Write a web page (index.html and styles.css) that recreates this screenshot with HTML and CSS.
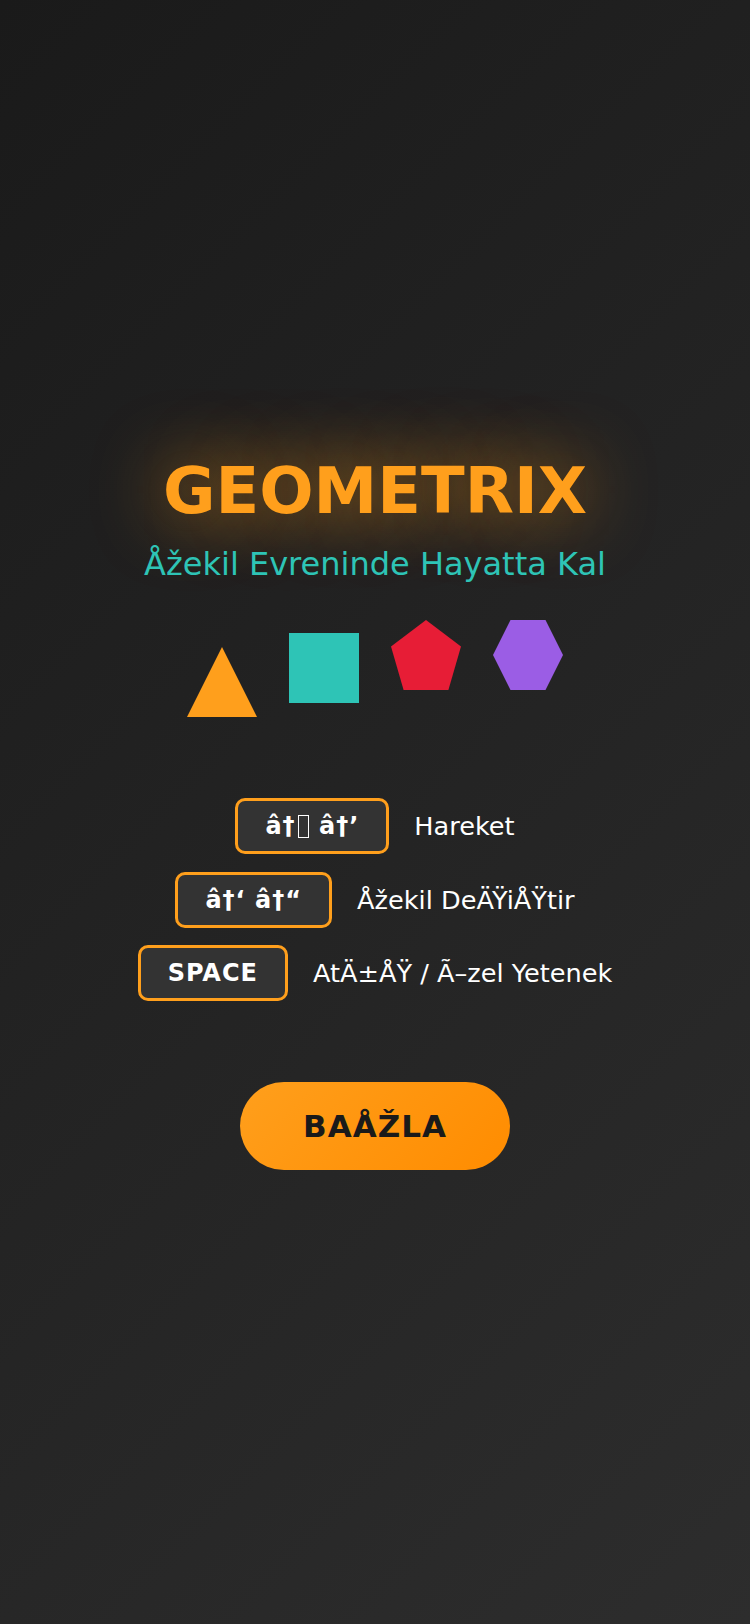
FILE: index.html
```html
<!DOCTYPE html>
<html lang="tr">
<head>
<meta charset="utf-8">
<title>GEOMETRIX</title>
<link rel="stylesheet" href="styles.css">
</head>
<body>
<main class="screen">
  <h1 class="title">GEOMETRIX</h1>
  <p class="subtitle">Åžekil Evreninde Hayatta Kal</p>
  <div class="shapes">
    <div class="shape triangle"></div>
    <div class="shape square"></div>
    <div class="shape pentagon"></div>
    <div class="shape hexagon"></div>
  </div>
  <div class="controls">
    <div class="control-row"><span class="key">â†<span class="tofu"></span> â†’</span><span class="label">Hareket</span></div>
    <div class="control-row"><span class="key">â†‘ â†“</span><span class="label">Åžekil DeÄŸiÅŸtir</span></div>
    <div class="control-row"><span class="key">SPACE</span><span class="label">AtÄ±ÅŸ / Ã–zel Yetenek</span></div>
  </div>
  <button class="start-btn" type="button">BAÅŽLA</button>
</main>
</body>
</html>
```
FILE: styles.css
```css
html, body {
  margin: 0;
  padding: 0;
}
body {
  background: linear-gradient(135deg, #1a1a1a 0%, #2d2d2d 100%);
  min-height: 100vh;
  font-family: "DejaVu Sans", sans-serif;
  color: #ffffff;
}
.screen {
  min-height: 1624px;
  display: flex;
  flex-direction: column;
  align-items: center;
  justify-content: center;
}
.title {
  margin: 0 0 17px;
  font-size: 64px;
  font-weight: bold;
  color: #ff9f1c;
  text-shadow: 0 0 70px rgba(255, 159, 28, 0.8);
}
.subtitle {
  margin: 0;
  font-size: 32px;
  color: #2ec4b6;
}
.shapes {
  margin-top: 37px;
  display: flex;
  align-items: flex-start;
  gap: 32px;
}
.shape {
  width: 70px;
  height: 70px;
}
.triangle {
  margin-top: 27px;
  background: #ff9f1c;
  clip-path: polygon(50% 0, 100% 100%, 0 100%);
}
.square {
  margin-top: 13px;
  background: #2ec4b6;
}
.pentagon {
  background: #e71d36;
  clip-path: polygon(50% 0, 100% 38%, 82% 100%, 18% 100%, 0 38%);
}
.hexagon {
  background: #9b5de5;
  clip-path: polygon(25% 0, 75% 0, 100% 50%, 75% 100%, 25% 100%, 0 50%);
}
.controls {
  margin-top: 81px;
  display: flex;
  flex-direction: column;
  align-items: center;
  gap: 17.5px;
}
.control-row {
  display: flex;
  align-items: center;
  gap: 25px;
}
.key {
  background: #333333;
  border: 3px solid #ff9f1c;
  border-radius: 10px;
  padding: 11px 27px;
  font-size: 24px;
  font-weight: bold;
  letter-spacing: 1px;
  color: #ffffff;
}
.tofu {
  display: inline-block;
  box-sizing: border-box;
  width: 11px;
  height: 23px;
  margin: 0 1px 0 2px;
  border: 1.5px solid #ffffff;
  vertical-align: -4px;
}
.label {
  font-size: 25.6px;
  color: #ffffff;
}
.start-btn {
  margin-top: 81px;
  border: none;
  border-radius: 50px;
  background: linear-gradient(135deg, #ff9f1c 0%, #ff8c00 100%);
  color: #1a1a1a;
  font-family: "DejaVu Sans", sans-serif;
  font-size: 31px;
  font-weight: bold;
  letter-spacing: 1px;
  padding: 0;
  width: 270px;
  height: 88px;
  cursor: pointer;
}
```
